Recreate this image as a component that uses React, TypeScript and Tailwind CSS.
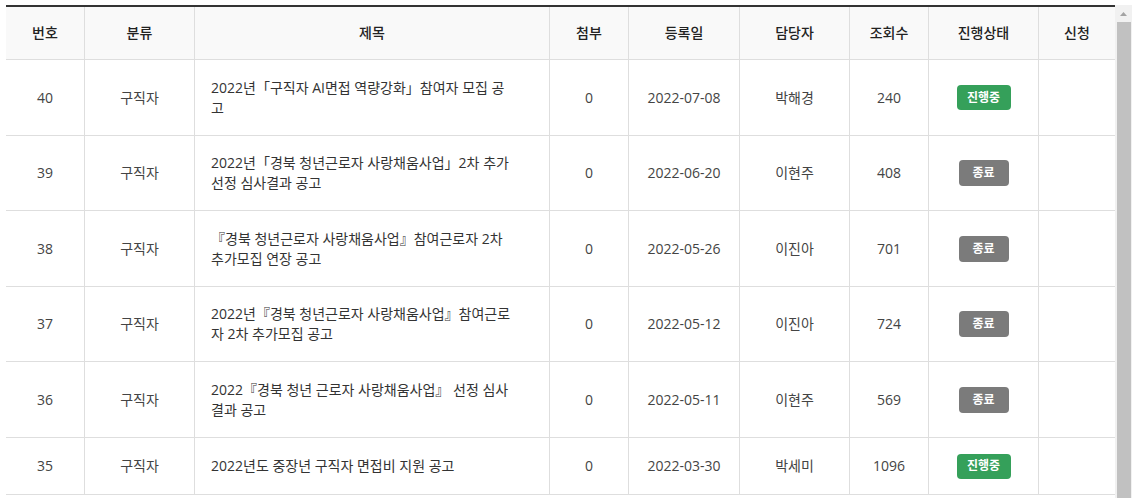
import React from "react";

type Row = {
  no: number;
  cat: string;
  title: string[];
  att: number;
  date: string;
  owner: string;
  views: number;
  status: "on" | "off";
  h: string;
};

const rows: Row[] = [
  { no: 40, cat: "구직자", title: ["2022년「구직자 AI면접 역량강화」참여자 모집 공", "고"], att: 0, date: "2022-07-08", owner: "박해경", views: 240, status: "on", h: "h-[76px]" },
  { no: 39, cat: "구직자", title: ["2022년「경북 청년근로자 사랑채움사업」2차 추가", "선정 심사결과 공고"], att: 0, date: "2022-06-20", owner: "이현주", views: 408, status: "off", h: "h-[75px]" },
  { no: 38, cat: "구직자", title: ["『경북 청년근로자 사랑채움사업』참여근로자 2차", "추가모집 연장 공고"], att: 0, date: "2022-05-26", owner: "이진아", views: 701, status: "off", h: "h-[76px]" },
  { no: 37, cat: "구직자", title: ["2022년『경북 청년근로자 사랑채움사업』참여근로", "자 2차 추가모집 공고"], att: 0, date: "2022-05-12", owner: "이진아", views: 724, status: "off", h: "h-[75px]" },
  { no: 36, cat: "구직자", title: ["2022『경북 청년 근로자 사랑채움사업』 선정 심사", "결과 공고"], att: 0, date: "2022-05-11", owner: "이현주", views: 569, status: "off", h: "h-[76px]" },
  { no: 35, cat: "구직자", title: ["2022년도 중장년 구직자 면접비 지원 공고"], att: 0, date: "2022-03-30", owner: "박세미", views: 1096, status: "on", h: "h-[57px]" },
];

const cols = "grid grid-cols-[78px_110px_355px_79px_111px_110px_79px_110px_77px]";
const cell = "flex items-center justify-center border-l border-[#dedede]";
const headers = ["번호", "분류", "제목", "첨부", "등록일", "담당자", "조회수", "진행상태", "신청"];

export default function App() {
  return (
    <div
      className="flex w-[1142px] h-[498px] overflow-hidden bg-white text-[14px] leading-[20px] text-[#444]"
      style={{ fontFamily: '"Open Sans", "Noto Sans CJK KR", sans-serif' }}
    >
      <div className="pl-[6px] pt-[5px] w-[1115px] shrink-0">
        <div className="border-t-2 border-[#333]">
          <div className={`${cols} h-[53px] bg-[#f9f9f9] border-b border-[#dedede] text-[#222] font-medium`}>
            {headers.map((h, i) => (
              <div key={h} className={i === 0 ? "flex items-center justify-center" : cell}>
                {h}
              </div>
            ))}
          </div>
          {rows.map((r) => (
            <div key={r.no} className={`${cols} ${r.h} border-b border-[#dedede]`}>
              <div className="flex items-center justify-center">{r.no}</div>
              <div className={cell}>{r.cat}</div>
              <div className="flex flex-col justify-center border-l border-[#dedede] pl-[16px] text-[#333]">
                {r.title.map((t, i) => (
                  <span key={i} className="whitespace-nowrap">{t}</span>
                ))}
              </div>
              <div className={cell}>{r.att}</div>
              <div className={cell}>{r.date}</div>
              <div className={cell}>{r.owner}</div>
              <div className={cell}>{r.views}</div>
              <div className={cell}>
                {r.status === "on" ? (
                  <span className="inline-flex items-center justify-center w-[54px] h-[25px] rounded-[4px] bg-[#35a05a] text-white text-[12px] font-bold">
                    진행중
                  </span>
                ) : (
                  <span className="inline-flex items-center justify-center w-[50px] h-[26px] rounded-[4px] bg-[#7b7b7b] text-white text-[12px] font-bold">
                    종료
                  </span>
                )}
              </div>
              <div className={cell}></div>
            </div>
          ))}
        </div>
      </div>
      <div className="w-[17px] shrink-0 mt-[5px] bg-[#f1f1f1] flex flex-col items-center">
        <div className="h-[17px] w-full flex items-center justify-center">
          <svg width="7" height="4" viewBox="0 0 7 4">
            <path d="M0 4 L3.5 0 L7 4 Z" fill="#a3a3a3" />
          </svg>
        </div>
        <div className="flex-1 w-[14px] bg-[#c1c1c1]" />
      </div>
      <div className="flex-1" />
    </div>
  );
}
